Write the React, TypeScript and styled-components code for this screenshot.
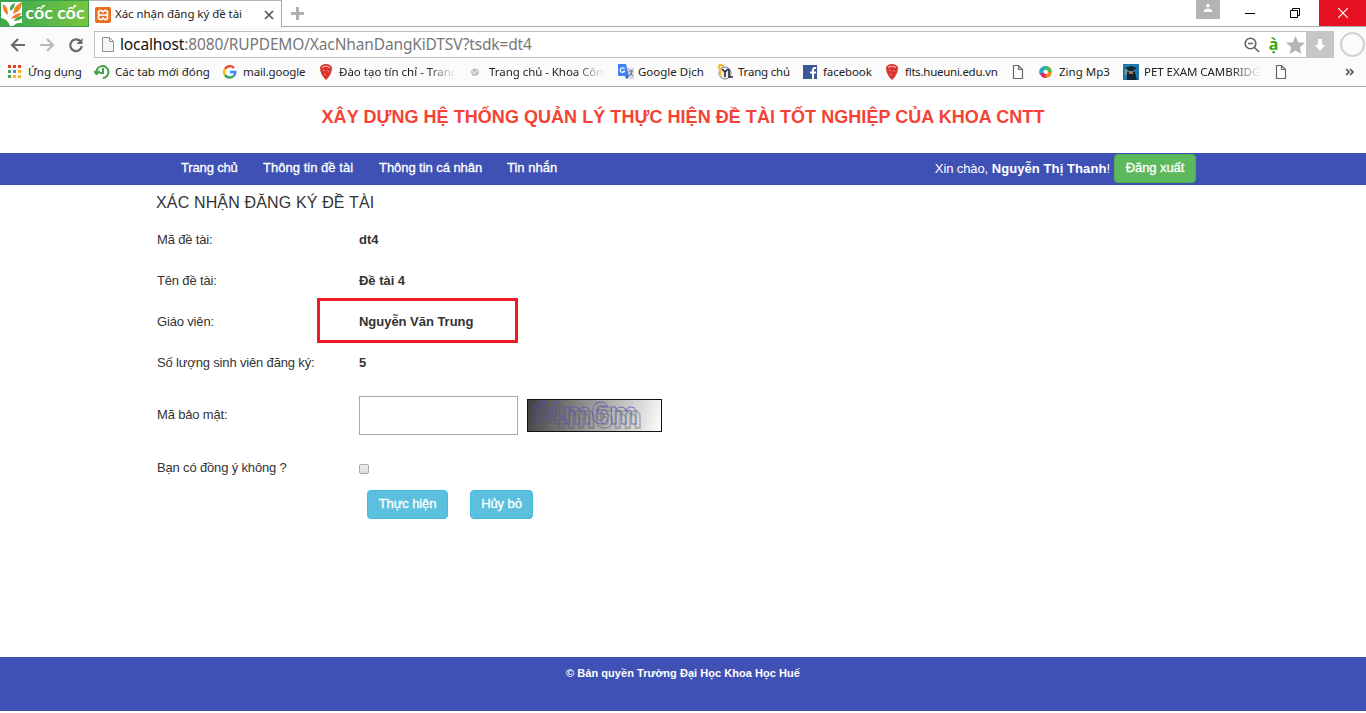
import React from "react";
import styled, { createGlobalStyle } from "styled-components";

const Global = createGlobalStyle`
  * { box-sizing: border-box; }
  body { margin: 0; background: #fff; font-family: "Liberation Sans", Arial, sans-serif; font-size: 13px; color: #333; overflow: hidden; }
  svg { display: block; flex: none; }
`;

const ui = `"Noto Sans", "Open Sans", sans-serif`;

const Page = styled.div`height: 713px; display: flex; flex-direction: column;`;

const TabStrip = styled.div`height: 27px; display: flex; border-bottom: 1px solid #ababab; flex: none;`;
const Logo = styled.div`
  width: 89px; height: 27px; display: flex; align-items: center; flex: none;
  background: linear-gradient(90deg, #35a853, #79c440); border: 1px solid #35a14c;
`;
const Tab = styled.div`
  width: 193px; height: 27px; display: flex; align-items: center; padding: 1px 7px 0 6px;
  border-top: 1px solid #b5b5b5; border-right: 1px solid #ababab; background: #fff; font-family: ${ui}; color: #222;
`;
const TabTitle = styled.span`flex: 1; margin-left: 4px; font-size: 11.5px; letter-spacing: -0.06px; white-space: nowrap; line-height: 16px; margin-top: -2px;`;
const NewTab = styled.div`padding: 7px 0 0 9px; flex: 1;`;
const UserBox = styled.div`width: 24px; height: 19px; background: #b3b3b3; padding: 3px 0 0 7px;`;
const WindowButton = styled.div<{ $w: number; $close?: boolean }>`
  width: ${p => p.$w}px; height: 26px; display: flex; align-items: center; justify-content: center;
  background: ${p => (p.$close ? "#e81123" : "transparent")};
`;

const Toolbar = styled.div`height: 35px; display: flex; align-items: center; background: #fbfbfb; padding-left: 10px; flex: none;`;
const NavIcons = styled.div`display: flex; gap: 13px; width: 84px; align-items: center;`;
const Address = styled.div`
  width: 1240px; height: 27px; display: flex; align-items: center; border: 1px solid #bdbdbd; background: #fff; padding-left: 7px;
  font-family: ${ui}; font-size: 15.5px; color: #777;
`;
const Url = styled.span`flex: 1; margin: -2px 0 0 6px; line-height: 20px; white-space: nowrap; letter-spacing: -0.14px; b { font-weight: 400; color: #111; }`;
const Tone = styled.span`width: 13px; text-align: center; font: bold 16px/20px ${ui}; color: #3ea50b; margin: -1px 6px 0 7px;`;
const Download = styled.div`width: 28px; height: 27px; background: #c6c6c6; display: flex; align-items: center; justify-content: center; margin: 0 -1px 0 1px;`;
const Ring = styled.div`width: 25px; height: 25px; border: 2px solid #d0d0d0; border-radius: 50%; margin-left: 6px; flex: none;`;

const Bookmarks = styled.div`
  height: 25px; display: flex; background: #fbfbfb; border-bottom: 1px solid #a6a6a6; padding-left: 7px; flex: none;
  font-family: ${ui}; font-size: 11.5px; color: #222;
`;
const Bookmark = styled.div<{ $w: number }>`width: ${p => p.$w}px; flex: none; display: flex; align-items: center; padding-bottom: 4px; height: 24px;`;
const BookmarkIcon = styled.div`width: 16px; height: 16px; flex: none;`;
const BookmarkText = styled.span<{ $ls: number; $fade?: number }>`
  margin-left: 5px; line-height: 16px; white-space: nowrap; letter-spacing: ${p => p.$ls}px;
  ${p => p.$fade && `width: ${p.$fade}px; overflow: hidden; mask-image: linear-gradient(90deg, #000 75%, transparent);`}
`;

const Banner = styled.h1`
  margin: 0; height: 66px; padding-top: 19px; text-align: center; color: #f44336; font-size: 18px; line-height: 22px; letter-spacing: 0.045px; flex: none;
`;
const Menu = styled.nav`
  height: 32px; background: #3f51b5; color: #fff; display: flex; padding: 1px 170px 0 181px; align-items: flex-start; flex: none; line-height: 28px;
`;
const MenuLink = styled.a<{ $w: number; $ls?: number }>`
  width: ${p => p.$w}px; letter-spacing: ${p => p.$ls ?? 0}px; -webkit-text-stroke: 0.3px #fff; white-space: nowrap;
`;
const Greeting = styled.span`margin-left: auto; margin-right: 4px; line-height: 30px; letter-spacing: -0.1px; b { letter-spacing: 0.09px; }`;
const Button = styled.button<{ $tone: "green" | "blue"; $w: number }>`
  width: ${p => p.$w}px; height: 29px; padding: 0 0 2px; border-radius: 4px; color: #fff; white-space: nowrap; letter-spacing: -0.1px;
  font: 13px/20px "Liberation Sans", Arial, sans-serif; -webkit-text-stroke: 0.3px #fff;
  border: 1px solid ${p => (p.$tone === "green" ? "#4cae4c" : "#46b8da")};
  background: ${p => (p.$tone === "green" ? "#5cb85c" : "#5bc0de")};
`;

const Main = styled.main`flex: 1; padding-left: 157px;`;
const Title = styled.h2`
  margin: 0 0 0 -1px; font-size: 16px; font-weight: 400; line-height: 20px; padding-top: 8px; height: 34px; letter-spacing: 0.15px;
`;
const Row = styled.div<{ $h: number }>`height: ${p => p.$h}px; display: flex; align-items: center;`;
const Label = styled.label<{ $raise?: boolean }>`
  width: 202px; flex: none; letter-spacing: -0.16px; padding-bottom: ${p => (p.$raise ? 2 : 0)}px;
`;
const Value = styled.b`letter-spacing: -0.03px;`;
const Highlight = styled.div`
  width: 201px; height: 45px; border: 3px solid #ed1c24; margin: -2px 0 0 -42px; padding: 2px 0 0 39px; display: flex; align-items: center;
`;
const CodeInput = styled.input`width: 159px; height: 39px; border: 1px solid #a9a9a9; margin-right: 9px; background: #fff;`;
const Check = styled.input`
  appearance: none; width: 10px; height: 10px; margin: 2px 0 0; border: 1px solid #aaa; border-radius: 2px; background: linear-gradient(#eee, #ddd);
`;
const Actions = styled.div`display: flex; gap: 22px; padding-left: 210px; margin-top: 1px;`;
const Footer = styled.footer`
  height: 54px; margin-bottom: 2px; background: #3f51b5; color: #fff; text-align: center; font-weight: 700; font-size: 11px; line-height: 16px; padding-top: 8px; letter-spacing: 0.04px; flex: none;
`;

const PageIcon = () => (
  <svg width="16" height="16" viewBox="0 0 16 16" fill="#fff" stroke="#666" strokeWidth="1.2"><path d="M3.500 1.500h5l4 4v9h-9zM8.500 1.500v4h4" /></svg>
);
const Shield = () => (
  <svg width="16" height="16" viewBox="0 0 16 16"><path d="M2 3Q4 0 8 0Q12 0 14 3Q14 11 8 16Q2 11 2 3" fill="#d8352f" /><path d="M4 3.500Q8 1 12 3.500" fill="none" stroke="#f6b8b2" strokeWidth="1.200" /><path d="M5 6l2 1M9 6l2 2M6 10l2 1" fill="none" stroke="#ee827b" /></svg>
);
const Apps = () => (
  <svg width="16" height="16" viewBox="0 0 16 16">
    {["#e53b30", "#e53b30", "#e53b30", "#4ba456", "#428df5", "#f9b916", "#4ba456", "#f9b916", "#f9b916"].map((c, i) => (
      <rect key={i} x={1 + (i % 3) * 5} y={1 + Math.floor(i / 3) * 5} width="3" height="3" fill={c} />
    ))}
  </svg>
);
const Recent = () => (
  <svg width="16" height="16" viewBox="0 0 16 16" fill="none" stroke="#3f9e45" strokeWidth="1.900"><path d="M2.500 9A6 6 0 1 1 9 14M0 7l2.500 3L5.500 7M9 4v5H5.500" /></svg>
);
const Google = () => (
  <svg width="16" height="16" viewBox="0 0 16 16" fill="none" strokeWidth="2.400">
    <path d="M3 5A5.500 5.500 0 0 1 12 4" stroke="#ea4335" /><path d="M3 5A5.500 5.500 0 0 0 3 11" stroke="#fbbc05" />
    <path d="M3 11A5.500 5.500 0 0 0 11.500 12" stroke="#34a853" /><path d="M11.500 12A5 5 0 0 0 13.300 8H8" stroke="#4285f4" />
  </svg>
);
const Faculty = () => (
  <svg width="16" height="16" viewBox="0 0 16 16" fill="none" stroke="#a7b8a0"><ellipse cx="7" cy="8" rx="3.500" ry="3" /><path d="M4.500 10l2.500-4 3 4M5 6l4 4" /><path d="M4 11h6" stroke="#ccb5b0" /></svg>
);
const Translate = () => (
  <svg width="17" height="16" viewBox="0 0 17 16">
    <path d="M8 4h9v11H8z" fill="#d5d8dc" /><path d="M1 0h8l3 12H2q-1 0-1-1z" fill="#4384f0" /><path d="M8 12h4l-2 3z" fill="#2d5fc0" />
    <path d="M7.500 5A2.300 2.300 0 1 0 7.500 7.300H5.500" fill="none" stroke="#fff" strokeWidth="1.200" /><path d="M12 7h4M14 6v1M15 7q-1 4-3 5M13 9l3 3" stroke="#68727e" fill="none" />
  </svg>
);
const Globe = () => (
  <svg width="17" height="16" viewBox="0 0 17 16" fill="none"><circle cx="8" cy="9" r="6" fill="#ececec" stroke="#777a91" /><path d="M5 5l3 3v5M11 5L8 8M12 5v8h4" stroke="#26263c" strokeWidth="1.600" /><path d="M1 4l2-3 4 1M3 4v8" stroke="#f1b928" strokeWidth="2.200" /></svg>
);
const Facebook = () => (
  <svg width="16" height="16" viewBox="0 0 16 16"><path fill="#3b5998" d="M1 1h14v14H1z" /><path d="M14 4h-1q-2 0-2 2v9M8 8.500h6" fill="none" stroke="#fff" strokeWidth="2" /></svg>
);
const Zing = () => (
  <svg width="16" height="16" viewBox="0 0 16 16" fill="none" strokeWidth="4"><path d="M3.800 10A4 4 0 0 1 8 4" stroke="#20a8c7" /><path d="M8 4A4 4 0 0 1 12 8" stroke="#55b947" /><path d="M12 8A4 4 0 0 1 8 12" stroke="#f6882b" /><path d="M8 12A4 4 0 0 1 4 9" stroke="#e52873" /></svg>
);
const Exam = () => (
  <svg width="16" height="16" viewBox="0 0 16 16"><path fill="#1d78ad" d="M0 0h16v16H0z" /><path fill="#142434" d="M2 4l6-2 6 2-6 4zM4 8h8l2 8H4z" /><path fill="#a07a55" d="M6 7h4v3H6z" /><path d="M3 5v6" stroke="#edbe46" /></svg>
);

const bookmarks: { icon: React.FC; text?: string; w: number; ls?: number; fade?: number }[] = [
  { icon: Apps, text: "Ứng dụng", w: 87, ls: -0.1 },
  { icon: Recent, text: "Các tab mới đóng", w: 128 },
  { icon: Google, text: "mail.google", w: 96, ls: -0.12 },
  { icon: Shield, text: "Đào tạo tín chỉ - Trang", w: 150, fade: 117 },
  { icon: Faculty, text: "Trang chủ - Khoa Công", w: 149, ls: -0.05, fade: 116 },
  { icon: Translate, text: "Google Dịch", w: 100 },
  { icon: Globe, text: "Trang chủ", w: 85, ls: -0.2 },
  { icon: Facebook, text: "facebook", w: 82, ls: -0.1 },
  { icon: Shield, text: "flts.hueuni.edu.vn", w: 126, ls: -0.27 },
  { icon: PageIcon, w: 28 },
  { icon: Zing, text: "Zing Mp3", w: 85 },
  { icon: Exam, text: "PET EXAM CAMBRIDGE", w: 150, ls: -0.04, fade: 117 },
  { icon: PageIcon, w: 72 },
];

export default function App() {
  return (
    <Page>
      <Global />
      <TabStrip>
        <Logo>
          <svg width="87" height="25" viewBox="0 0 87 25">
            <path d="M-1 1h22v24H-1z" fill="#fff" />
            <path d="M2 3q5 2 5 11Q1 11 2 3zM12 13Q13 4 21 1q0 9-9 12z" fill="#ef8127" />
            <path d="M9 10Q8 4 14 2q0 5-5 8zM13 20q2-5 8-5v2q-3 3-8 3z" fill="#48a848" />
            <path d="M-1 17q7 0 10 8H-1z" fill="#48a848" />
            <path d="M10 18q3-6 11-6-3 5-11 6z" fill="#f47b32" />
            <path d="M12 25q4-4 9-3v3z" fill="#48a848" />
            <text x="24.500" y="18" textLength="59" lengthAdjust="spacingAndGlyphs" fill="#fff" fontFamily="Lato, Open Sans, sans-serif" fontWeight="700" fontSize="17">cốc cốc</text>
          </svg>
        </Logo>
        <Tab>
          <svg width="16" height="16" viewBox="0 0 16 16"><rect width="16" height="16" rx="2" fill="#ec6e20" /><path d="M5 8L3.500 7V4.500L5 3.500h1.500L8 5l1.500-1.500H11l1.500 1V7L11 8l1.500 1v2.500l-1.500 1H9.500L8 11l-1.500 1.500H5l-1.500-1V9zM5.500 8h5" fill="none" stroke="#fff" strokeWidth="1.600" /></svg>
          <TabTitle>Xác nhận đăng ký đề tài</TabTitle>
          <svg width="10" height="10" viewBox="0 0 10 10"><path d="M1 1l8 8M9 1L1 9" stroke="#555" strokeWidth="1.700" /></svg>
        </Tab>
        <NewTab><svg width="13" height="13" viewBox="0 0 13 13"><path d="M6.500 0v13M0 6.500h13" stroke="#b0b0b0" strokeWidth="3" /></svg></NewTab>
        <UserBox><svg width="10" height="10" viewBox="0 0 10 10" fill="#fff"><circle cx="5" cy="2.800" r="1.800" /><path d="M1 9V8q0-2.500 4-2.500T9 8v1z" /></svg></UserBox>
        <WindowButton $w={60}><svg width="10" height="10"><path d="M0 5.500h10" stroke="#000" /></svg></WindowButton>
        <WindowButton $w={30}><svg width="10" height="10" viewBox="0 0 10 10" fill="none" stroke="#000"><path d="M.5 2.500h7v7h-7zM2.500 2V.5h7v7H8" /></svg></WindowButton>
        <WindowButton $w={9} />
        <WindowButton $w={47} $close><svg width="10" height="10" viewBox="0 0 10 10"><path d="M0 0l10 10M10 0L0 10" stroke="#fff" strokeWidth="1.200" /></svg></WindowButton>
      </TabStrip>
      <Toolbar>
        <NavIcons>
          <svg width="16" height="14" viewBox="0 0 16 14" fill="none" stroke="#6a6a6a" strokeWidth="2.200"><path d="M15 7H2M8 1L2 7l6 6" /></svg>
          <svg width="16" height="14" viewBox="0 0 16 14" fill="none" stroke="#b9b9b9" strokeWidth="2.200"><path d="M1 7h13M8 1l6 6-6 6" /></svg>
          <svg width="16" height="16" viewBox="0 0 16 16" fill="none" stroke="#6a6a6a" strokeWidth="2.200"><path d="M12.500 4.500A5.800 5.800 0 1 0 13.800 9" /><path d="M14.500 1v6H8.500z" fill="#6a6a6a" stroke="none" /></svg>
        </NavIcons>
        <Address>
          <svg width="12" height="15" viewBox="0 0 12 15"><path d="M.5.5h7l4 4v10H.5zM7.500.5v4h4" fill="#f5f5f5" stroke="#909090" /></svg>
          <Url><b>localhost</b>:8080/RUPDEMO/XacNhanDangKiDTSV?tsdk=dt4</Url>
          <svg width="16" height="16" viewBox="0 0 16 16" fill="none" stroke="#606060" strokeWidth="1.600"><circle cx="6.500" cy="6.500" r="5.300" /><path d="M4 6.500h5M10.500 10.500l4.500 4.500" /></svg>
          <Tone>ạ̀</Tone>
          <svg width="19" height="18" viewBox="0 0 19 18"><path d="M9.500 0l2.700 6.200 6.800.6-5.100 4.500 1.500 6.700-5.900-3.500L3.600 18l1.500-6.700L0 6.800l6.800-.6z" fill="#b5b5b5" /></svg>
          <Download><svg width="10" height="12" viewBox="0 0 10 12"><path d="M3 0h4v6h3l-5 6-5-6h3z" fill="#fff" /></svg></Download>
        </Address>
        <Ring />
      </Toolbar>
      <Bookmarks>
        {bookmarks.map(({ icon: Icon, text, w, ls = 0, fade }, i) => (
          <Bookmark key={i} $w={w}>
            <BookmarkIcon><Icon /></BookmarkIcon>
            {text && <BookmarkText $ls={ls} $fade={fade}>{text}</BookmarkText>}
          </Bookmark>
        ))}
        <Bookmark $w={16}><svg width="9" height="8" viewBox="0 0 9 8" fill="none" stroke="#555" strokeWidth="1.700"><path d="M1 1l3 3-3 3M5 1l3 3-3 3" /></svg></Bookmark>
      </Bookmarks>
      <Banner>XÂY DỰNG HỆ THỐNG QUẢN LÝ THỰC HIỆN ĐỀ TÀI TỐT NGHIỆP CỦA KHOA CNTT</Banner>
      <Menu>
        <MenuLink $w={82} $ls={-0.15}>Trang chủ</MenuLink>
        <MenuLink $w={116} $ls={0.03}>Thông tin đề tài</MenuLink>
        <MenuLink $w={128} $ls={-0.06}>Thông tin cá nhân</MenuLink>
        <MenuLink $w={60}>Tin nhắn</MenuLink>
        <Greeting>Xin chào, <b>Nguyễn Thị Thanh</b>!</Greeting>
        <Button $tone="green" $w={82}>Đăng xuất</Button>
      </Menu>
      <Main>
        <Title>XÁC NHẬN ĐĂNG KÝ ĐỀ TÀI</Title>
        <Row $h={41}><Label>Mã đề tài:</Label><Value>dt4</Value></Row>
        <Row $h={41}><Label>Tên đề tài:</Label><Value>Đề tài 4</Value></Row>
        <Row $h={41}><Label>Giáo viên:</Label><Highlight><Value>Nguyễn Văn Trung</Value></Highlight></Row>
        <Row $h={41}><Label>Số lượng sinh viên đăng ký:</Label><Value>5</Value></Row>
        <Row $h={64}>
          <Label $raise>Mã bảo mật:</Label>
          <CodeInput />
          <svg width="135" height="33" viewBox="0 0 135 33">
            <defs><linearGradient id="shade" gradientUnits="userSpaceOnUse" x1="4" y1="0" x2="135" y2="33"><stop stopColor="#444" /><stop offset="1" stopColor="#fff" /></linearGradient></defs>
            <rect x=".5" y=".5" width="134" height="32" fill="url(#shade)" stroke="#111" />
            <g fontFamily="Liberation Sans" fontWeight="700" fontSize="31" fill="none">
              <text x="11" y="29" textLength="104" lengthAdjust="spacingAndGlyphs" stroke="#555" strokeOpacity=".35" strokeWidth="1.800">f4m6m</text>
              <text x="7" y="25" textLength="104" lengthAdjust="spacingAndGlyphs" stroke="#5550b8" strokeOpacity=".75" strokeWidth=".8">f4m6m</text>
            </g>
          </svg>
        </Row>
        <Row $h={42}><Label $raise>Bạn có đồng ý không ?</Label><Check type="checkbox" /></Row>
        <Actions><Button $tone="blue" $w={81}>Thực hiện</Button><Button $tone="blue" $w={63}>Hủy bỏ</Button></Actions>
      </Main>
      <Footer>© Bản quyền Trường Đại Học Khoa Học Huế</Footer>
    </Page>
  );
}
